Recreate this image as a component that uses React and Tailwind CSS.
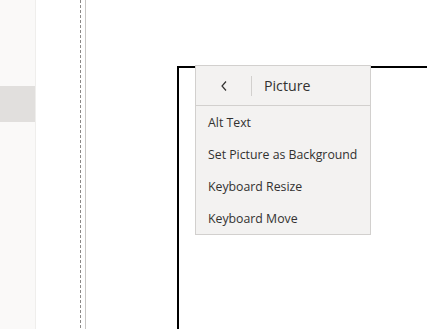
export default function App() {
  const items = ["Alt Text", "Set Picture as Background", "Keyboard Resize", "Keyboard Move"];
  return (
    <div className="relative flex h-[329px] w-[427px] overflow-hidden bg-white" style={{ fontFamily: '"Open Sans", "Noto Sans", sans-serif' }}>
      <div className="h-full w-[36px] shrink-0 border-r border-[#efeeec] bg-[#faf9f8]">
        <div className="mt-[86px] h-[36px] bg-[#e1dfdd]" />
      </div>
      <div className="w-[44px] shrink-0" />
      <div className="h-full w-px shrink-0 bg-[repeating-linear-gradient(to_bottom,#8a8886_0px,#8a8886_3px,transparent_3px,transparent_5px)]" />
      <div className="w-[4px] shrink-0" />
      <div className="h-full w-px shrink-0 bg-[#c8c6c4]" />
      <div className="relative h-full flex-1">
        <div className="absolute left-[91px] top-[66px] h-[300px] w-[300px] border-l-2 border-t-2 border-black" />
      </div>
      <div className="absolute left-[195px] top-[65px] flex h-[170px] w-[176px] flex-col border border-[#d2d0ce] bg-[#f3f2f1]">
        <div className="flex h-[40px] shrink-0 items-center border-b border-[#d2d0ce]">
          <div className="flex w-[55px] items-center justify-center">
            <svg width="8" height="12" viewBox="0 0 8 12" className="ml-[1px] mt-[1px]">
              <path d="M6 1.5 L2 6 L6 10.5" fill="none" stroke="#323130" strokeWidth="1.2" />
            </svg>
          </div>
          <div className="h-[20px] w-px bg-[#d2d0ce]" />
          <div className="ml-[12px] pt-[1px] text-[14.2px] text-[#323130]">Picture</div>
        </div>
        {items.map((t) => (
          <div key={t} className="flex h-[32px] shrink-0 items-center pl-[12px] pt-[2px] text-[12.3px] text-[#323130]">
            {t}
          </div>
        ))}
      </div>
    </div>
  );
}
